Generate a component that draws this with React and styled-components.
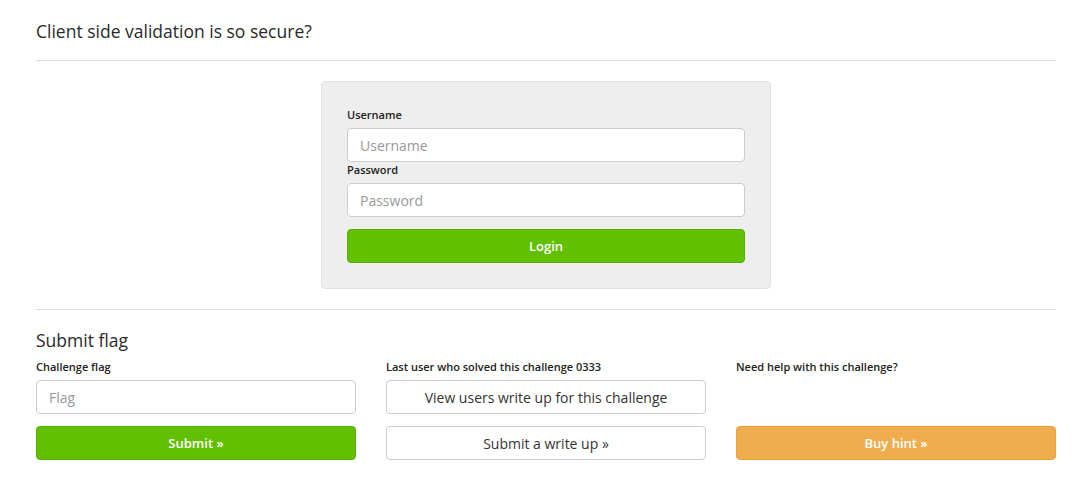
import React from "react";
import styled, { createGlobalStyle } from "styled-components";

const GlobalStyle = createGlobalStyle`
  html, body {
    margin: 0;
    padding: 0;
    background: #fff;
  }
  body {
    font-family: "Open Sans", "DejaVu Sans", sans-serif;
    color: #333;
  }
  * {
    box-sizing: border-box;
  }
`;

const Page = styled.div`
  width: 1020px;
  margin: 0 36px;
  padding-top: 18px;
`;

const Title = styled.h3`
  margin: 0;
  font-size: 17.5px;
  font-weight: 400;
  line-height: 26px;
  color: #2a2a2a;
`;

const Divider = styled.hr`
  margin: ${(p) => p.$top}px 0 ${(p) => p.$bottom}px;
  border: 0;
  border-top: 1px solid #ddd;
`;

const LoginWrap = styled.div`
  display: flex;
  justify-content: center;
`;

const LoginPanel = styled.form`
  width: 450px;
  padding: 25px 25px 25px;
  background: #eee;
  border: 1px solid #e3e3e3;
  border-radius: 4px;
  display: flex;
  flex-direction: column;
`;

const Label = styled.label`
  display: block;
  font-size: 11px;
  font-weight: 600;
  line-height: 15px;
  color: #222;
  margin-bottom: 6px;
`;

const Input = styled.input`
  display: block;
  width: 100%;
  height: 34px;
  padding: 6px 12px;
  font-family: inherit;
  font-size: 14px;
  color: #555;
  background: #fff;
  border: 1px solid #ccc;
  border-radius: 4px;
  outline: none;
  margin-bottom: ${(p) => p.$after || 0}px;
  &::placeholder {
    color: #999;
  }
`;

const Button = styled.button`
  display: block;
  width: 100%;
  height: 34px;
  padding: 0 12px;
  margin-bottom: ${(p) => p.$after || 0}px;
  font-family: inherit;
  font-weight: ${(p) => (p.$variant === "default" ? 400 : 600)};
  font-size: ${(p) => (p.$variant === "default" ? 14 : 13)}px;
  border-radius: 4px;
  cursor: pointer;
  color: ${(p) => (p.$variant === "default" ? "#333" : "#fff")};
  background: ${(p) =>
    p.$variant === "success"
      ? "#62c000"
      : p.$variant === "warning"
      ? "#f0ad4e"
      : "#fff"};
  border: 1px solid
    ${(p) =>
      p.$variant === "success"
        ? "#58ad00"
        : p.$variant === "warning"
        ? "#eea236"
        : "#ccc"};
`;

const SectionTitle = styled.h4`
  margin: 0 0 8px;
  font-size: 17.5px;
  font-weight: 400;
  line-height: 22px;
  color: #2a2a2a;
`;

const Columns = styled.div`
  display: grid;
  grid-template-columns: repeat(3, 320px);
  column-gap: 30px;
`;

const Column = styled.div`
  display: flex;
  flex-direction: column;
`;

const Spacer = styled.div`
  height: 46px;
`;

export default function App() {
  return (
    <>
      <GlobalStyle />
      <Page>
        <Title>Client side validation is so secure?</Title>
        <Divider $top={16} $bottom={20} />
        <LoginWrap>
          <LoginPanel onSubmit={(e) => e.preventDefault()}>
            <Label>Username</Label>
            <Input placeholder="Username" />
            <Label>Password</Label>
            <Input type="password" placeholder="Password" $after={12} />
            <Button $variant="success">Login</Button>
          </LoginPanel>
        </LoginWrap>
        <Divider $top={20} $bottom={19} />
        <SectionTitle>Submit flag</SectionTitle>
        <Columns>
          <Column>
            <Label>Challenge flag</Label>
            <Input placeholder="Flag" $after={12} />
            <Button $variant="success">Submit »</Button>
          </Column>
          <Column>
            <Label>Last user who solved this challenge 0333</Label>
            <Button $variant="default" $after={12}>
              View users write up for this challenge
            </Button>
            <Button $variant="default">Submit a write up »</Button>
          </Column>
          <Column>
            <Label>Need help with this challenge?</Label>
            <Spacer />
            <Button $variant="warning">Buy hint »</Button>
          </Column>
        </Columns>
      </Page>
    </>
  );
}
